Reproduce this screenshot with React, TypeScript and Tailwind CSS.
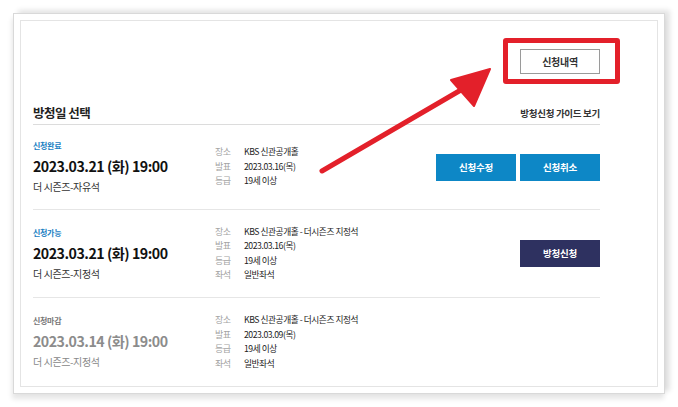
import React from "react";

type Row = {
  status: string;
  statusColor: string;
  date: string;
  dateColor: string;
  sub: string;
  subColor: string;
  info: [string, string][];
  h: string;
  last?: boolean;
  buttons: { label: string; bg: string }[];
};

const rows: Row[] = [
  {
    status: "신청완료",
    statusColor: "text-[#1a80c2]",
    date: "2023.03.21 (화) 19:00",
    dateColor: "text-[#111]",
    sub: "더 시즌즈-자유석",
    subColor: "text-[#333]",
    info: [
      ["장소", "KBS 신관공개홀"],
      ["발표", "2023.03.16(목)"],
      ["등급", "19세 이상"],
    ],
    h: "h-[85px]",
    buttons: [
      { label: "신청수정", bg: "bg-[#0d87c6]" },
      { label: "신청취소", bg: "bg-[#0d87c6]" },
    ],
  },
  {
    status: "신청가능",
    statusColor: "text-[#1a80c2]",
    date: "2023.03.21 (화) 19:00",
    dateColor: "text-[#111]",
    sub: "더 시즌즈-지정석",
    subColor: "text-[#333]",
    info: [
      ["장소", "KBS 신관공개홀 - 더시즌즈 지정석"],
      ["발표", "2023.03.16(목)"],
      ["등급", "19세 이상"],
      ["좌석", "일반좌석"],
    ],
    h: "h-[88px]",
    buttons: [{ label: "방청신청", bg: "bg-[#2e3160]" }],
  },
  {
    status: "신청마감",
    statusColor: "text-[#777]",
    date: "2023.03.14 (화) 19:00",
    dateColor: "text-[#8c8c8c]",
    sub: "더 시즌즈-지정석",
    subColor: "text-[#888]",
    info: [
      ["장소", "KBS 신관공개홀 - 더시즌즈 지정석"],
      ["발표", "2023.03.09(목)"],
      ["등급", "19세 이상"],
      ["좌석", "일반좌석"],
    ],
    h: "flex-1",
    last: true,
    buttons: [],
  },
];

export default function App() {
  return (
    <div
      className="relative w-[678px] h-[407px] bg-white overflow-hidden"
      style={{ fontFamily: '"Noto Sans CJK KR", "Noto Sans", sans-serif' }}
    >
      <div className="pl-[13px] pt-[13px]">
        <div className="w-[652px] h-[381px] border border-[#d9d9d9] bg-white p-[6px] shadow-[5px_-3px_5px_rgba(0,0,0,0.11),-1px_5px_5px_rgba(0,0,0,0.1)]">
          <div className="h-full border border-[#e4e4e4] pl-[12px] pr-[57px] pt-[28px] flex flex-col">
            <div className="flex justify-end">
              <div className="w-[80px] h-[25px] border border-[#9a9a9a] flex items-center justify-center text-[10px] font-bold text-[#333] tracking-[-0.3px]">
                신청내역
              </div>
            </div>
            <div className="mt-[29px] h-[22px] flex items-center justify-between border-b border-[#dcdcdc]">
              <span className="text-[12.5px] font-bold text-[#222] tracking-[-0.5px]">방청일 선택</span>
              <span className="text-[9.5px] font-bold text-[#333] tracking-[-0.3px]">방청신청 가이드 보기</span>
            </div>
            {rows.map((r, i) => (
              <div
                key={i}
                className={`${r.h} flex items-center ${r.last ? "" : "border-b border-[#e6e6e6]"}`}
              >
                <div className="w-[182px] flex flex-col">
                  <div className={`leading-[12px] text-[8px] font-bold tracking-[-0.3px] ${r.statusColor}`}>
                    {r.status}
                  </div>
                  <div className={`mt-[3px] leading-[22px] text-[14.2px] font-bold tracking-[-0.5px] ${r.dateColor}`}>
                    {r.date}
                  </div>
                  <div className={`mt-[3px] leading-[14px] text-[10px] tracking-[-0.4px] ${r.subColor}`}>
                    {r.sub}
                  </div>
                </div>
                <div className="flex flex-col">
                  {r.info.map(([k, v]) => (
                    <div key={k} className="flex leading-[14.5px] text-[8.7px] tracking-[-0.45px]">
                      <span className="w-[29px] text-[#a3a3a3] text-[9px]">{k}</span>
                      <span className="text-[#222]">{v}</span>
                    </div>
                  ))}
                </div>
                <div className="flex-1 flex justify-end gap-[4px]">
                  {r.buttons.map((b) => (
                    <div
                      key={b.label}
                      className={`w-[80px] h-[27px] ${b.bg} text-white text-[9.5px] font-bold flex items-center justify-center tracking-[-0.3px]`}
                    >
                      {b.label}
                    </div>
                  ))}
                </div>
              </div>
            ))}
          </div>
        </div>
      </div>

      {/* annotation: red highlight box */}
      <div className="absolute left-[503px] top-[38px] w-[117px] h-[46px] border-[5px] border-[#e3202a] rounded-[3px]" />

      {/* annotation: red arrow */}
      <svg className="absolute left-0 top-0" width="678" height="407" viewBox="0 0 678 407">
        <line x1="322" y1="171" x2="466" y2="87" stroke="#e3202a" strokeWidth="5" strokeLinecap="round" />
        <polygon points="490,69 451,80 474,106" fill="#e3202a" stroke="#e3202a" strokeWidth="2" strokeLinejoin="round" />
      </svg>
    </div>
  );
}
